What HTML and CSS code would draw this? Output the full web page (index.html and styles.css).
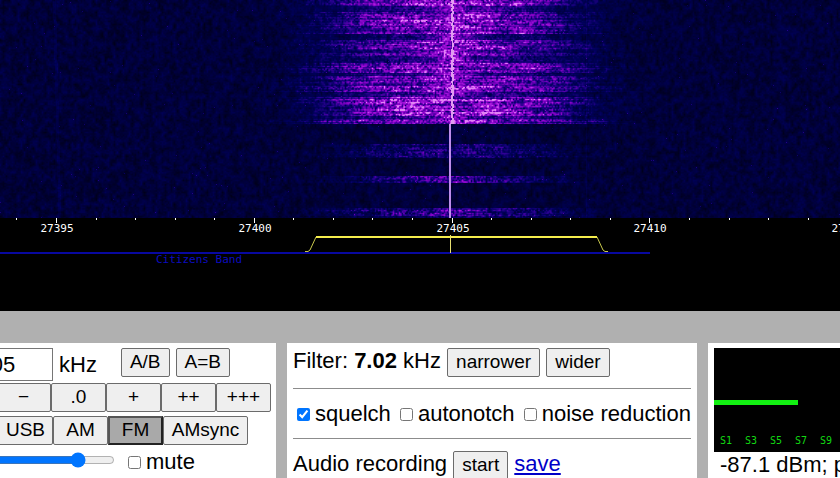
FILE: index.html
```
<!DOCTYPE html>
<html lang="en">

<head>
    <meta charset="UTF-8">
    <meta name="viewport" content="width=device-width, initial-scale=1.0">
    <title>WebSDR</title>
    <link rel="stylesheet" href="styles.css">
</head>

<body>

    <div class="spectrum">
        <canvas id="waterfall" class="waterfall"></canvas>
        <svg id="scale" class="scale">
            <g id="ticks"></g>
            <path class="band" d="M0 35H650" />
            <text class="band-name" x="156" y="45">Citizens Band</text>
            <path class="edge" d="M305 33.5H308L310 32L316 19M597 19L603 32L605 33.5H608" />
            <path class="passband" d="M316 19H597" />
            <path class="carrier" d="M450.5 17V35" />
        </svg>
    </div>

    <div class="panels">
        <div class="panel tuning">
            <div class="tuning-body">
                <div class="row freq">
                    <input type="text" id="freq" value="27405" aria-label="Frequency">
                    <label for="freq">kHz</label>
                    <button class="first">A/B</button>
                    <button>A=B</button>
                </div>
                <div class="row steps">
                    <button>−</button>
                    <button>.0</button>
                    <button>+</button>
                    <button>++</button>
                    <button>+++</button>
                </div>
                <div class="row modes">
                    <button>USB</button>
                    <button>AM</button>
                    <button class="active">FM</button>
                    <button class="wide">AMsync</button>
                </div>
                <div class="row volume">
                    <input type="range" min="0" max="100" value="80" aria-label="Volume">
                    <label><input type="checkbox">mute</label>
                </div>
            </div>
        </div>

        <div class="panel filter">
            <div class="line">
                Filter: <b>7.02</b> kHz
                <button>narrower</button>
                <button>wider</button>
            </div>
            <hr>
            <div class="line checks">
                <label><input type="checkbox" checked>squelch</label>
                <label><input type="checkbox">autonotch</label>
                <label><input type="checkbox">noise reduction</label>
            </div>
            <hr>
            <div class="line">
                Audio recording
                <button>start</button>
                <a href="#">save</a>
            </div>
        </div>

        <div class="panel signal">
            <div class="meter">
                <div class="bar"></div>
                <div class="marks">
                    <span>S1</span><span>S3</span><span>S5</span><span>S7</span><span>S9</span>
                </div>
            </div>
            <div class="reading">-87.1 dBm; p</div>
        </div>
    </div>

    <script src="script.js"></script>
</body>

</html>
```
FILE: styles.css
```
* {
    box-sizing: border-box;
}

body {
    margin: 0;
    height: 100vh;
    overflow: hidden;
    display: flex;
    flex-direction: column;
    background: #b0b0b0;
    color: #000;
    font-family: "Liberation Sans", Arial, sans-serif;
    font-size: 22px;
    line-height: 25px;
}

.spectrum {
    flex: none;
    margin-bottom: 32px;
    background: #000;
}

.waterfall {
    display: block;
    width: 100%;
    height: 218px;
}

.scale {
    display: block;
    width: 100%;
    height: 93px;
    font-family: "DejaVu Sans Mono", monospace;
    font-size: 11px;
    fill: none;
}

.scale .tick {
    stroke: #fff;
}

.scale .khz {
    fill: #fff;
    text-anchor: middle;
}

.scale .band {
    stroke: #0808a0;
    stroke-width: 2;
}

.scale .band-name {
    fill: #0c0cc0;
}

.scale .edge {
    stroke: #c8c84c;
}

.scale .passband {
    stroke: #f4ec4c;
    stroke-width: 2;
}

.scale .carrier {
    stroke: #e8e070;
}

.panels {
    flex: 1;
    min-height: 0;
    display: grid;
    grid-template-columns: minmax(0, 276fr) minmax(0, 410fr) minmax(0, 132fr);
    gap: 11px;
}

.panel {
    padding: 5px 6px;
    background: #fff;
    overflow: hidden;
    white-space: nowrap;
}

button {
    height: 29px;
    padding: 0 8px 2px;
    border: 1px solid #6b6b6b;
    border-radius: 2px;
    background: #efefef;
    color: #000;
    font-family: inherit;
    font-size: 19px;
    line-height: 25px;
}

input[type="checkbox"] {
    margin: 3px 5px 3px 4px;
}

/* the tuning panel runs off the left side of the window */
.tuning {
    display: flex;
    justify-content: flex-end;
    padding-right: 5px;
}

.tuning-body {
    flex: none;
    width: 275px;
}

.row {
    display: flex;
    align-items: flex-start;
}

.freq {
    gap: 6px;
    line-height: 33px;
    margin-bottom: 2px;
}

.freq input {
    width: 103px;
    height: 33px;
    margin-left: -46px;
    padding: 0 3px;
    border: 1px solid #767676;
    border-radius: 0;
    font: inherit;
}

.freq .first {
    margin-left: 18px;
}

.steps {
    margin-bottom: 4px;
}

.steps button,
.modes button {
    width: 55px;
    padding: 0 0 2px;
}

.modes {
    padding-left: 2px;
    margin-bottom: 4px;
}

.modes .wide {
    width: 85px;
}

.modes .active {
    border: 2px solid;
    border-color: #555 #222 #222 #555;
    border-radius: 0;
    background: #a9a9a9;
    line-height: 23px;
}

.volume input[type="range"] {
    width: 160px;
    height: 16px;
    margin: 3px 9px 0 -41px;
}

.line {
    height: 29px;
}

.checks {
    height: 26px;
}

.checks label {
    margin-right: -1px;
}

hr {
    height: 1px;
    margin: 11px 0 12px;
    border: 0;
    background: #8c8c8c;
}

a {
    color: #0000c8;
}

.meter {
    height: 104px;
    padding-top: 52px;
    margin-right: -6px;
    background: #000;
}

.bar {
    width: 84px;
    height: 5px;
    background: #12f012;
}

.marks {
    display: flex;
    margin-top: 30px;
    padding-left: 6px;
    color: #12d812;
    font-family: "DejaVu Sans Mono", monospace;
    font-size: 10px;
    line-height: 12px;
}

.marks span {
    flex: none;
    width: 25px;
}

.reading {
    padding-left: 6px;
}
```
FILE: script.js
```
var canvas = document.querySelector('#waterfall');
var ticks = document.querySelector('#ticks');
var svgNS = 'http://www.w3.org/2000/svg';

// level -> colour, from quiet to loud
var stops = [
    [0, 0, 0, 18],
    [0.25, 0, 0, 90],
    [0.4, 36, 0, 140],
    [0.6, 120, 0, 190],
    [0.8, 165, 20, 220],
    [1, 225, 130, 245]
];

// how strong the voice is over time: [first line, strength, half width]
var speech = [
    [0, 0.9, 105], [6, 0.4, 80], [12, 0.85, 105], [18, 0.7, 100],
    [20, 0.95, 105], [29, 0.75, 110], [34, 0.25, 80], [40, 0.7, 110],
    [44, 0.85, 105], [50, 0.4, 90], [53, 0.7, 115], [56, 0.4, 100],
    [63, 0.7, 115], [66, 0.9, 120], [73, 0.4, 90], [76, 0.75, 120],
    [83, 0.6, 110], [86, 0.8, 125], [92, 0.4, 100], [97, 0.95, 110],
    [106, 0.85, 100], [112, 0.95, 105], [116, 0.4, 100], [119, 0.85, 125],
    [124, 0, 0], [144, 0.4, 100], [158, 0, 0], [176, 0.55, 90],
    [183, 0, 0], [208, 0.55, 110], [216, 0.3, 100]
];

var seed = 27405;

function random() {
    seed = (seed * 1664525 + 1013904223) % 4294967296;
    return seed / 4294967296;
}

function makeGrid(w, h) {
    var grid = [];
    for (var i = 0; i < w * h; i++) {
        grid.push(random());
    }
    return grid;
}

function smooth(grid, w, x, y) {
    var x0 = Math.floor(x), y0 = Math.floor(y);
    var fx = x - x0, fy = y - y0;
    var i = y0 * w + x0;
    var top = grid[i] * (1 - fx) + grid[i + 1] * fx;
    var bottom = grid[i + w] * (1 - fx) + grid[i + w + 1] * fx;
    return top * (1 - fy) + bottom * fy;
}

function colour(level) {
    level = Math.max(0, Math.min(1, level));
    var k = 1;
    while (stops[k][0] < level) {
        k++;
    }
    var a = stops[k - 1], b = stops[k];
    var f = (level - a[0]) / (b[0] - a[0]);
    return [a[1] + (b[1] - a[1]) * f, a[2] + (b[2] - a[2]) * f, a[3] + (b[3] - a[3]) * f];
}

function drawWaterfall() {
    seed = 27405;
    var w = canvas.width = canvas.clientWidth;
    var h = canvas.height = canvas.clientHeight;
    var ctx = canvas.getContext('2d');
    var image = ctx.createImageData(w, h);
    var gw = Math.ceil(w / 3) + 3;
    var coarse = makeGrid(gw, Math.ceil(h / 4) + 3);
    var fw = Math.ceil(w / 1.5) + 3;
    var fine = makeGrid(fw, Math.ceil(h / 1.5) + 3);
    var ww = Math.ceil(w / 18) + 3;
    var wide = makeGrid(ww, Math.ceil(h / 2) + 3);
    var part = 0;

    for (var y = 0; y < h; y++) {
        while (part < speech.length - 1 && speech[part + 1][0] <= y) {
            part++;
        }
        var strength = speech[part][1];
        var reach = speech[part][2] * (0.9 + random() * 0.2);
        var rowGain = 0.8 + random() * 0.4;
        var talking = y < 124;

        for (var x = 0; x < w; x++) {
            var d = Math.abs(x - 452);
            var n = smooth(fine, fw, x / 1.5, y / 1.5);
            var level = 0.02 + smooth(coarse, gw, x / 3, y / 4) * 0.15 + n * 0.08;

            if (strength > 0) {
                var patch = 0.5 + smooth(wide, ww, x / 18, y / 2);
                var fall = 1 / (1 + Math.exp((d - reach) / 20));
                fall *= 1 - d / (talking ? 450 : 260);
                level += strength * rowGain * patch * fall * (0.16 + n * 0.74);
            }
            if (talking) {
                // the voice never fades out completely close to the carrier
                level += 0.07 / (1 + Math.exp((d - 145) / 16));
                level += (0.95 - strength) * (0.25 + n * 0.5) * Math.exp(-d * d / 260);
            }
            // faint steady carriers
            if (Math.abs(x - 54 - y / 40) < 1.5 || Math.abs(x - 586) < 1) {
                level += 0.05;
            }
            if (random() > 0.9985) {
                level += 0.2;
            }

            var c = colour(level);
            if (talking && x > 450 && x < 454) {
                c = x === 452 || n > 0.4 ? [225, 155, 240] : c;
            }
            if (!talking && x > 448 && x < 451) {
                c = [190, 140, 235];
            }
            var i = (y * w + x) * 4;
            image.data[i] = c[0];
            image.data[i + 1] = c[1];
            image.data[i + 2] = c[2];
            image.data[i + 3] = 255;
        }
    }
    ctx.putImageData(image, 0, 0);
}

function drawTicks() {
    ticks.innerHTML = '';
    for (var khz = 27394; 57 + (khz - 27395) * 39.56 < canvas.clientWidth + 20; khz++) {
        var x = Math.round(57 + (khz - 27395) * 39.56);
        var major = khz % 5 === 0;
        var tick = document.createElementNS(svgNS, 'path');
        tick.setAttribute('class', 'tick');
        tick.setAttribute('d', 'M' + (x - 0.5) + ' 0V' + (major ? 5 : 2));
        ticks.appendChild(tick);

        if (major) {
            var label = document.createElementNS(svgNS, 'text');
            label.setAttribute('class', 'khz');
            label.setAttribute('x', x);
            label.setAttribute('y', 14);
            label.textContent = khz;
            ticks.appendChild(label);
        }
    }
}

function draw() {
    drawWaterfall();
    drawTicks();
}

window.onresize = draw;
draw();
```
